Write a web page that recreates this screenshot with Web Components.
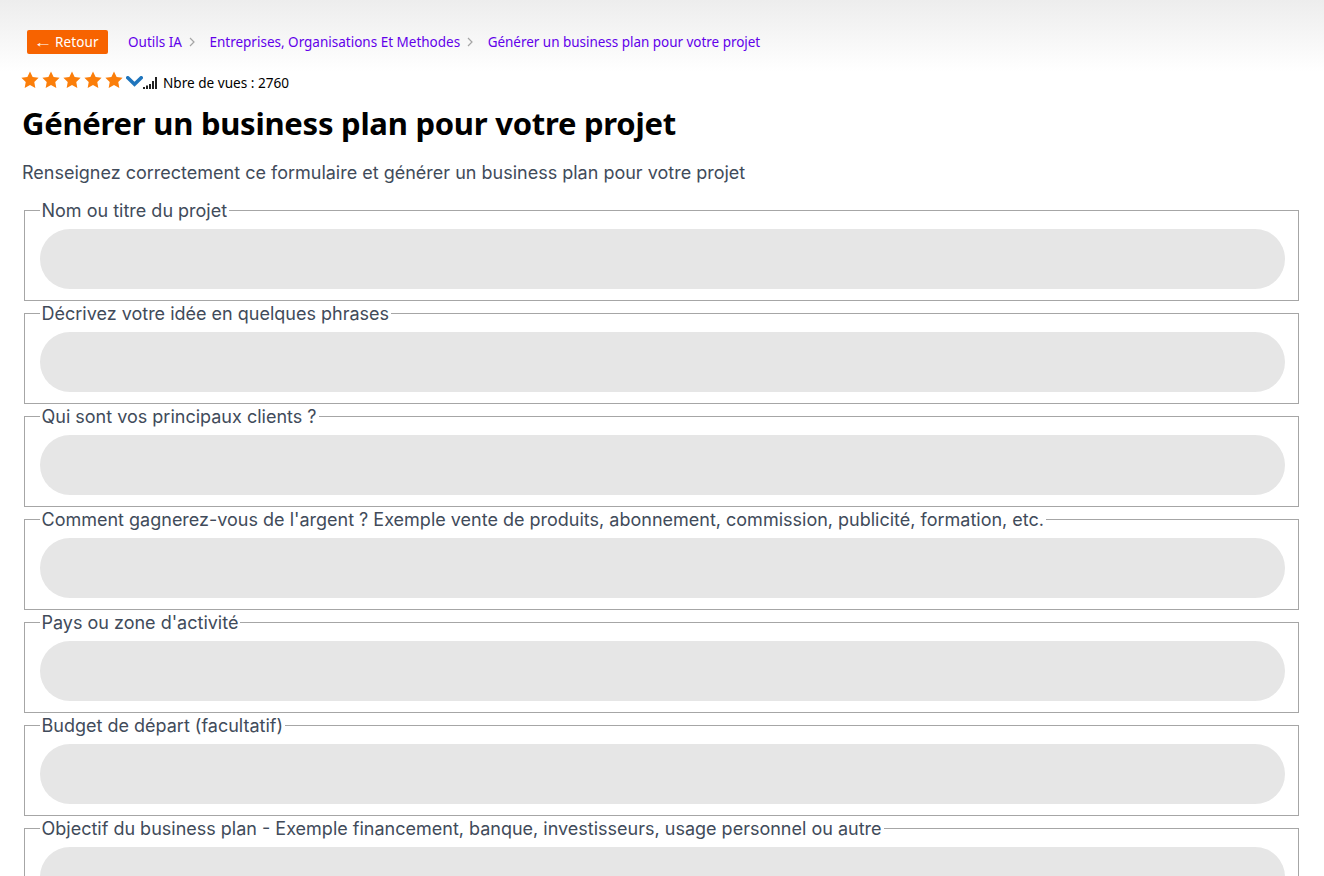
<!DOCTYPE html>
<html lang="fr"><head><meta charset="utf-8"><title>Générer un business plan</title>
<style>
html,body{margin:0;padding:0;height:876px;overflow:hidden;background:#fff}
body{font-family:"Noto Sans","Open Sans",sans-serif}
</style></head><body>
<app-page>
  <crumb-bar slot="top"></crumb-bar>
  <rating-row slot="top"></rating-row>
  <h1 slot="top">Générer un business plan pour votre projet</h1>
  <form-field label="Nom ou titre du projet"></form-field>
  <form-field label="Décrivez votre idée en quelques phrases"></form-field>
  <form-field label="Qui sont vos principaux clients ?"></form-field>
  <form-field label="Comment gagnerez-vous de l'argent ? Exemple vente de produits, abonnement, commission, publicité, formation, etc."></form-field>
  <form-field label="Pays ou zone d'activité"></form-field>
  <form-field label="Budget de départ (facultatif)"></form-field>
  <form-field label="Objectif du business plan - Exemple financement, banque, investisseurs, usage personnel ou autre"></form-field>
</app-page>
<script>
function def(name,html,init){customElements.define(name,class extends HTMLElement{connectedCallback(){if(this.shadowRoot)return;const r=this.attachShadow({mode:'open'});r.innerHTML=html;if(init)init(this,r);}})}
def('app-page',`<style>
:host{display:block;height:876px;overflow:hidden;background:linear-gradient(#ededed 0,#fff 72px);}
.top{display:block;padding:30px 0 0 22px}
::slotted(h1){margin:10px 0 0;font:700 31px/40px "Noto Sans",sans-serif;color:#000;letter-spacing:-.25px}
p{margin:0;padding:18px 0 0 22px;font:400 18px/24px Inter,sans-serif;color:#414b5a}
.fields{display:flex;flex-direction:column;gap:2px;padding:15px 25px 0 24px}
</style>
<div class="top"><slot name="top"></slot></div>
<p>Renseignez correctement ce formulaire et générer un business plan pour votre projet</p>
<div class="fields"><slot></slot></div>`);
def('crumb-bar',`<style>
:host{display:flex;align-items:center;height:24px;padding-left:5px;font:400 13.5px/24px "Noto Sans",sans-serif;color:#6200ea}
a{color:#6200ea;text-decoration:none}
.back{background:#f76300;color:#fff;border-radius:2px;height:24px;width:81px;text-align:center;margin-right:20px;box-sizing:border-box;letter-spacing:.08px;white-space:nowrap}
.back span{display:inline-block;font-family:"Liberation Sans",sans-serif;font-size:14px;transform:scaleX(1.35);margin-right:1px}
svg{margin:0 15px 0 7px;flex:none}
.mid{margin-left:-.5px}
.last{letter-spacing:-.03px;margin-left:-.5px}
</style>
<a class="back" href="#"><span>←</span> Retour</a>
<a href="#">Outils IA</a><svg width="6" height="10" viewBox="0 0 6 10"><path d="M1 1l4 4-4 4" fill="none" stroke="#a5a5a5" stroke-width="1.2"/></svg>
<a class="mid" href="#">Entreprises, Organisations Et Methodes</a><svg width="6" height="10" viewBox="0 0 6 10"><path d="M1 1l4 4-4 4" fill="none" stroke="#a5a5a5" stroke-width="1.2"/></svg>
<a class="last" href="#">Générer un business plan pour votre projet</a>`);
const star='<svg width="18" height="18" viewBox="0 0 24 24"><path fill="#fb7e0a" d="M12 .6l3.5 7.3 8 1.1-5.8 5.6 1.4 8L12 18.8l-7.1 3.8 1.4-8L.5 9l8-1.1z"/></svg>';
def('rating-row',`<style>
:host{display:flex;align-items:center;height:24px;margin-top:15px;font:400 13.6px/24px "Noto Sans",sans-serif;color:#000}
.stars{display:flex;gap:3px;margin:-2px 0 0 -1px}
span{position:relative;top:2px}
</style>
<div class="stars">${star.repeat(5)}</div>
<svg style="margin:1px 0 0 3px" width="17" height="11" viewBox="0 0 17 11"><path d="M1.8 1.8L8.5 8.3l6.7-6.5" fill="none" stroke="#1f75bd" stroke-width="3.6" stroke-linecap="round"/></svg>
<svg style="margin:3px 5px 0 -1px" width="16" height="12" viewBox="0 0 16 12"><path fill="#222" d="M1 10h2v2H1zM4 8.5h2V12H4zM7 7h2v5H7zM10 4h2v8h-2zM13 0h2v12h-2z"/></svg>
<span>Nbre de vues : 2760</span>`);
def('form-field',`<style>
:host{display:block}
fieldset{margin:0;padding:0 13px 11px 15px;border:1px solid #a6a6a6;min-width:0;display:block}
legend{padding:0 2px 0 1.5px;font:400 18px/21px Inter,sans-serif;color:#414b5a}
.in{height:60px;border-radius:30px;background:#e6e6e6;margin-top:8px}
</style>
<fieldset><legend></legend><div class="in"></div></fieldset>`,(h,r)=>{r.querySelector('legend').textContent=h.getAttribute('label')});
</script>
</body></html>
